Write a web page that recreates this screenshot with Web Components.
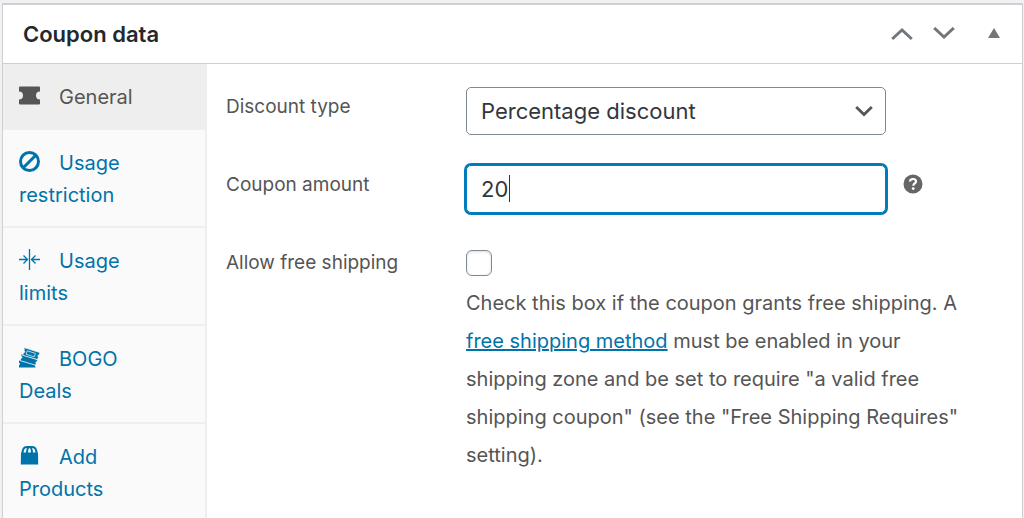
<!DOCTYPE html>
<html lang="en">
<head>
<meta charset="utf-8">
<meta name="viewport" content="width=device-width, initial-scale=1">
<title>Coupon data</title>
<style>
  html, body { height: 100%; }
  body {
    box-sizing: border-box;
    margin: 0;
    padding: 3px 1px 0 2px;
    overflow: hidden;
    background: #f1f1f1;
    color: #555;
    font: 20px/32px Inter, "Liberation Sans", sans-serif;
  }
</style>
</head>
<body>
<coupon-panel>
  <span slot="title">Coupon data</span>
  <coupon-tabs slot="tabs">
    <coupon-tab icon="ticket" active>General</coupon-tab>
    <coupon-tab icon="ban">Usage restriction</coupon-tab>
    <coupon-tab icon="limits">Usage limits</coupon-tab>
    <coupon-tab icon="tickets">BOGO Deals</coupon-tab>
    <coupon-tab icon="bag">Add Products</coupon-tab>
  </coupon-tabs>
  <coupon-form></coupon-form>
</coupon-panel>

<script>
const ICONS = {
  ticket: '<path fill="currentColor" d="M1 1.500H20a1 1 0 0 1 1 1V6.500a4 4 0 0 0 0 8V18.500a1 1 0 0 1-1 1H1a1 1 0 0 1-1-1V14.500a4 4 0 0 0 0-8V2.500a1 1 0 0 1 1-1z"/>',
  ban: '<g fill="none" stroke="currentColor" stroke-width="3"><circle cx="10.500" cy="10.500" r="9"/><path d="M4.500 16.500 16.500 4.500"/></g>',
  limits: '<g fill="none" stroke="currentColor" stroke-width="1.300"><path d="M10.500 0V21M0 10.500H8M4.500 6.500l4 4-4 4M21 10.500H13M16.500 6.500l-4 4 4 4"/></g>',
  tickets: '<g fill="currentColor"><path d="M0 13.500h2.500l14 3.500-.8 1.200.9 2.300H0v-2.200l1.200-1.200L0 15.600z"/><g stroke="#fafafa" stroke-width=".8"><path d="M2 6.800 18.800 12.600l-.8 2-1.200.6.400 1.700-.6 1.300L1 13.600l.8-2.200 1.400-.8L2 9z"/><path d="M5.200.6 21 5.600l-.6 2-1.500.8.400 1.900-.7 2.300L3.600 8.300l.8-2.300 1.500-1-.8-1.700z"/></g></g><path d="M8.200 3.800 16.400 6.400 15.300 9.800 7.100 7.300z" fill="none" stroke="#fafafa" stroke-width=".7"/>',
  bag: '<path fill="currentColor" d="M2 7.500h17l.2 12H1.800z"/><g fill="none" stroke="currentColor" stroke-width="2"><path d="M3.500 9C3.500 4 5 2 7.500 2h6C16 2 17.500 4 17.500 9M8 9c0-4 .8-7 2.500-7S13 5 13 9"/></g>'
};

class BaseElement extends HTMLElement {
  connectedCallback() {
    if (!this.shadowRoot) this.attachShadow({ mode: 'open' }).innerHTML = this.render();
  }
}

customElements.define('coupon-panel', class extends BaseElement {
  render() {
    return `
      <style>
        :host { display: flex; flex-direction: column; box-sizing: border-box; min-height: 100%;
          background: #fff; border: 1px solid #ccd0d4; border-top-width: 2px; }
        header { display: flex; align-items: center; height: 58px; padding: 0 10px 0 20px;
          border-bottom: 1px solid #ccd0d4; }
        h2 { flex: 1; margin: 0; color: #23282d; font-size: 22px; line-height: 32px; font-weight: 600; }
        nav { display: flex; align-items: center; }
        button { display: grid; place-items: center; width: 42px; height: 42px; padding: 0;
          border: 0; background: none; color: #72777c; }
        button:last-child { width: 36px; margin-left: 11px; }
        svg { display: block; }
        .body { display: flex; flex: 1; }
      </style>
      <header>
        <h2><slot name="title"></slot></h2>
        <nav aria-label="Panel order">
          <button type="button" aria-label="Move up"><svg width="22" height="14" viewBox="0 0 22 14" fill="none" stroke="currentColor" stroke-width="3"><path d="M1.200 12 11 3l9.800 9"/></svg></button>
          <button type="button" aria-label="Move down"><svg width="22" height="14" viewBox="0 0 22 14" fill="none" stroke="currentColor" stroke-width="3"><path d="M1.200 1 11 10l9.800-9"/></svg></button>
          <button type="button" aria-label="Toggle panel"><svg width="12" height="12" viewBox="0 0 12 12" fill="currentColor"><path d="M6 0 12 10H0z"/></svg></button>
        </nav>
      </header>
      <div class="body"><slot name="tabs"></slot><slot></slot></div>`;
  }
});

customElements.define('coupon-tabs', class extends BaseElement {
  render() {
    return `
      <style>
        :host { display: block; box-sizing: border-box; flex: 0 0 204px; background: #fafafa; border-right: 2px solid #eee; }
      </style>
      <slot></slot>`;
  }
});

customElements.define('coupon-tab', class extends BaseElement {
  render() {
    return `
      <style>
        :host { display: block; border-bottom: 2px solid #eee; }
        a { display: block; padding: 17px 32px 15px 16px; color: #0073aa; text-decoration: none; }
        :host([active]) a { background: #eee; color: #555; }
        svg { width: 21px; height: 21px; margin-right: 19px; vertical-align: -2px; }
      </style>
      <a href="#"><svg viewBox="0 0 21 21" aria-hidden="true">${ICONS[this.getAttribute('icon')]}</svg><slot></slot></a>`;
  }
});

customElements.define('help-tip', class extends BaseElement {
  render() {
    return `
      <style>
        :host { display: block; color: #666; }
        svg { display: block; }
      </style>
      <svg width="20" height="20" viewBox="0 0 20 20" role="img" aria-label="Help">
        <circle cx="10" cy="10" r="9.500" fill="currentColor"/>
        <path d="M7 7.600C7 5.800 8.300 5 10 5s3 .9 3 2.500c0 2-2.700 2-2.700 4.200" fill="none" stroke="#fff" stroke-width="2.200"/>
        <circle cx="10.200" cy="14.600" r="1.400" fill="#fff"/>
      </svg>`;
  }
});

customElements.define('coupon-form', class extends BaseElement {
  render() {
    return `
      <style>
        :host { display: block; flex: 1; min-width: 0; padding: 23px 40px 0 19px; }
        form { display: grid; grid-template-columns: 240px minmax(0, 1fr); row-gap: 30px; }
        label { font-size: 19px; line-height: 40px; }
        .control { display: flex; gap: 17px; }
        .field { position: relative; flex: 0 1 420px; min-width: 0; }
        select, input[type="text"] { box-sizing: border-box; display: block; width: 100%; height: 48px; margin: 0;
          padding: 0 14px; border: 1px solid #7e8993; border-radius: 5px; background: #fff; color: #32373c;
          font: 22px/32px Inter, "Liberation Sans", sans-serif; appearance: none; outline: 0; }
        input[type="text"] { border-color: #007cba; box-shadow: 0 0 0 2px #007cba; caret-color: transparent; }
        .field svg { position: absolute; top: 17px; right: 13px; pointer-events: none; }
        .caret { position: absolute; top: 10px; left: 43px; width: 1px; height: 27px; background: #32373c; pointer-events: none; }
        help-tip { margin-top: 9px; }
        .shipping { padding-top: 7px; }
        input[type="checkbox"] { appearance: none; box-sizing: border-box; display: block; width: 26px; height: 26px; margin: 0;
          border: 1px solid #7e8993; border-radius: 6px; background: #fff; box-shadow: inset 0 1px 3px #0002; }
        p { margin: 8px 0 0; line-height: 38px; }
        a { color: #0073aa; }
      </style>
      <form>
        <label for="type">Discount type</label>
        <div class="control"><div class="field">
          <select id="type"><option>Percentage discount</option><option>Fixed cart discount</option><option>Fixed product discount</option></select>
          <svg width="18" height="14" viewBox="0 0 18 14" fill="none" stroke="#555" stroke-width="2.800"><path d="M1.200 3 9 10.500 16.800 3"/></svg>
        </div></div>
        <label for="amount">Coupon amount</label>
        <div class="control"><div class="field"><input id="amount" type="text" value="20"><span class="caret"></span></div><help-tip></help-tip></div>
        <label for="shipping">Allow free shipping</label>
        <div class="shipping">
          <input id="shipping" type="checkbox" aria-describedby="hint">
          <p id="hint">Check this box if the coupon grants free shipping. A <a href="#">free shipping method</a> must be enabled in your shipping zone and be set to require "a valid free shipping coupon" (see the "Free Shipping Requires" setting).</p>
        </div>
      </form>`;
  }
  connectedCallback() {
    super.connectedCallback();
    const amount = this.shadowRoot.getElementById('amount');
    amount.focus();
    amount.setSelectionRange(2, 2);
  }
});
</script>
</body>
</html>
